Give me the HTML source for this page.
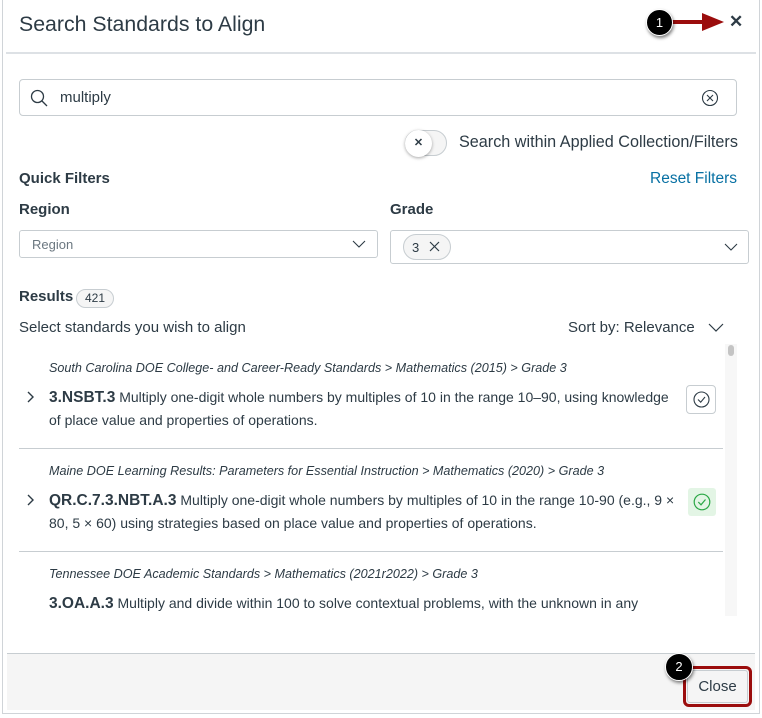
<!DOCTYPE html>
<html><head><style>
*{box-sizing:border-box;margin:0;padding:0}
body{width:762px;height:718px;background:#fff;font-family:"Liberation Sans",sans-serif;color:#2d3b45;position:relative;overflow:hidden}
.a{position:absolute;white-space:nowrap}
.it{font-style:italic;font-size:12.6px;color:#2d3b45}
.tx{font-size:14px;color:#2d3b45}
.code{font-weight:bold;font-size:15.5px}
</style></head><body>
<div class="a" style="left:2px;top:0;width:758px;height:714px;border:1px solid #d0d4d8;border-top:none"></div>
<div class="a" style="left:19px;top:12px;font-size:21.3px;color:#2d3b45">Search Standards to Align</div>
<div class="a" style="left:6px;top:52px;width:750px;height:2px;background:#dde1e5"></div>
<div class="a" style="left:729px;top:12px;font-size:17px;font-weight:bold;color:#2d3b45">✕</div>
<div class="a" style="left:656px;top:20px;width:52px;height:4px;background:#9b0d0d"></div>
<svg class="a" style="left:702px;top:13px" width="22" height="18"><polygon points="0,0 22,9 0,18" fill="#9b0d0d"/></svg>
<div class="a" style="left:646px;top:9px;width:27px;height:27px;border-radius:50%;background:#000;border:1px solid #fff;box-shadow:1px 2px 3px rgba(0,0,0,.5);color:#fff;font-size:13px;text-align:center;line-height:25px">1</div>

<div class="a" style="left:19px;top:79px;width:718px;height:37px;border:1px solid #c7cdd1;border-radius:4px"></div>
<svg class="a" style="left:30px;top:89px" width="18" height="18"><circle cx="7.5" cy="7.5" r="6" fill="none" stroke="#2d3b45" stroke-width="1.3"/><line x1="12" y1="12" x2="17" y2="17" stroke="#2d3b45" stroke-width="1.3"/></svg>
<div class="a tx" style="left:60px;top:89px;font-size:15px">multiply</div>
<svg class="a" style="left:701px;top:89px" width="18" height="18"><circle cx="9" cy="9" r="7.5" fill="none" stroke="#2d3b45" stroke-width="1.1"/><path d="M6 6L12 12M12 6L6 12" stroke="#2d3b45" stroke-width="1.1"/></svg>

<div class="a" style="left:405px;top:130px;width:42px;height:26px;border-radius:13px;background:#f5f5f5;border:1px solid #c7cdd1"></div>
<div class="a" style="left:405px;top:130px;width:27px;height:27px;border-radius:50%;background:#fff;box-shadow:0 1px 3px rgba(0,0,0,.35);text-align:center;line-height:27px;font-size:11px;font-weight:bold">✕</div>
<div class="a tx" style="left:459px;top:133px;font-size:16.2px">Search within Applied Collection/Filters</div>

<div class="a" style="left:19px;top:170px;font-size:15px;font-weight:bold">Quick Filters</div>
<div class="a" style="left:650px;top:170px;font-size:15.5px;color:#0770a3">Reset Filters</div>
<div class="a" style="left:19px;top:201px;font-size:15px;font-weight:bold">Region</div>
<div class="a" style="left:390px;top:201px;font-size:15px;font-weight:bold">Grade</div>
<div class="a" style="left:19px;top:230px;width:359px;height:28px;border:1px solid #c7cdd1;border-radius:3px"></div>
<div class="a" style="left:32px;top:237px;font-size:13px;color:#6b7780">Region</div>
<svg class="a" style="left:352px;top:240px" width="14" height="8"><path d="M1 1L7 7L13 1" fill="none" stroke="#2d3b45" stroke-width="1.1"/></svg>
<div class="a" style="left:390px;top:230px;width:359px;height:34px;border:1px solid #c7cdd1;border-radius:3px"></div>
<div class="a" style="left:403px;top:234px;width:48px;height:26px;border:1px solid #c7cdd1;border-radius:13px;background:#f5f5f5"></div>
<div class="a" style="left:412px;top:240px;font-size:13px">3</div>
<svg class="a" style="left:429px;top:241px" width="11" height="11"><path d="M1 1L10 10M10 1L1 10" stroke="#2d3b45" stroke-width="1.2"/></svg>
<svg class="a" style="left:724px;top:243px" width="14" height="8"><path d="M1 1L7 7L13 1" fill="none" stroke="#2d3b45" stroke-width="1.1"/></svg>

<div class="a" style="left:19px;top:288px;font-size:15px;font-weight:bold">Results</div>
<div class="a" style="left:76px;top:289px;width:38px;height:19px;border:1px solid #c7cdd1;border-radius:10px;background:#f5f5f5;font-size:12px;text-align:center;line-height:17px">421</div>
<div class="a tx" style="left:19px;top:319px;font-size:15px">Select standards you wish to align</div>
<div class="a tx" style="left:568px;top:319px;font-size:15px">Sort by: Relevance</div>
<svg class="a" style="left:708px;top:323px" width="16" height="9"><path d="M1 1L8 8L15 1" fill="none" stroke="#2d3b45" stroke-width="1.2"/></svg>

<div class="a" style="left:725px;top:344px;width:12px;height:272px;background:#f7f7f7"></div>
<div class="a" style="left:728px;top:345px;width:6px;height:11px;border-radius:3px;background:#c4c4c4"></div>

<div class="a it" style="left:49px;top:361px">South Carolina DOE College- and Career-Ready Standards &gt; Mathematics (2015) &gt; Grade 3</div>
<svg class="a" style="left:27px;top:391px" width="8" height="12"><path d="M1 1L6 6L1 11" fill="none" stroke="#2d3b45" stroke-width="1.4"/></svg>
<div class="a tx" style="left:49px;top:389px"><span class="code">3.NSBT.3</span> Multiply one-digit whole numbers by multiples of 10 in the range 10–90, using knowledge</div>
<div class="a tx" style="left:49px;top:412px">of place value and properties of operations.</div>
<div class="a" style="left:686px;top:385px;width:30px;height:29px;border:1px solid #c7cdd1;border-radius:4px"></div>
<svg class="a" style="left:692px;top:390px" width="19" height="19"><circle cx="9.5" cy="9.5" r="7.5" fill="none" stroke="#2d3b45" stroke-width="1.1"/><path d="M6 9.5L8.7 12.2L13 7" fill="none" stroke="#2d3b45" stroke-width="1.1"/></svg>
<div class="a" style="left:19px;top:448px;width:704px;height:1px;background:#c7cdd1"></div>

<div class="a it" style="left:49px;top:464px">Maine DOE Learning Results: Parameters for Essential Instruction &gt; Mathematics (2020) &gt; Grade 3</div>
<svg class="a" style="left:27px;top:494px" width="8" height="12"><path d="M1 1L6 6L1 11" fill="none" stroke="#2d3b45" stroke-width="1.4"/></svg>
<div class="a tx" style="left:49px;top:492px"><span class="code">QR.C.7.3.NBT.A.3</span> Multiply one-digit whole numbers by multiples of 10 in the range 10-90 (e.g., 9 ×</div>
<div class="a tx" style="left:49px;top:515px">80, 5 × 60) using strategies based on place value and properties of operations.</div>
<div class="a" style="left:688px;top:488px;width:28px;height:28px;border-radius:3px;background:#e3f5e5"></div>
<svg class="a" style="left:692px;top:492px" width="20" height="20"><circle cx="10" cy="10" r="7.8" fill="none" stroke="#2aa745" stroke-width="1.2"/><path d="M6.3 10L9 12.8L13.5 7.5" fill="none" stroke="#2aa745" stroke-width="1.2"/></svg>
<div class="a" style="left:19px;top:551px;width:704px;height:1px;background:#c7cdd1"></div>

<div class="a it" style="left:49px;top:567px">Tennessee DOE Academic Standards &gt; Mathematics (2021r2022) &gt; Grade 3</div>
<div class="a tx" style="left:49px;top:595px"><span class="code">3.OA.A.3</span> Multiply and divide within 100 to solve contextual problems, with the unknown in any</div>
<div class="a" style="left:3px;top:616px;width:722px;height:37px;background:#fff"></div>

<div class="a" style="left:7px;top:653px;width:748px;height:57px;background:#f5f5f5;border-top:1px solid #c7cdd1"></div>
<div class="a" style="left:683px;top:666px;width:69px;height:41px;border:3px solid #9b0d0d;border-radius:6px;background:#f5f5f5"></div>
<div class="a" style="left:687px;top:670px;width:61px;height:33px;border:1px solid #c7cdd1;border-radius:3px;background:#f5f5f5;font-size:15px;text-align:center;line-height:31px">Close</div>
<div class="a" style="left:665px;top:653px;width:28px;height:28px;border-radius:50%;background:#000;border:1px solid #fff;box-shadow:1px 2px 3px rgba(0,0,0,.5);color:#fff;font-size:13px;text-align:center;line-height:26px">2</div>
</body></html>
